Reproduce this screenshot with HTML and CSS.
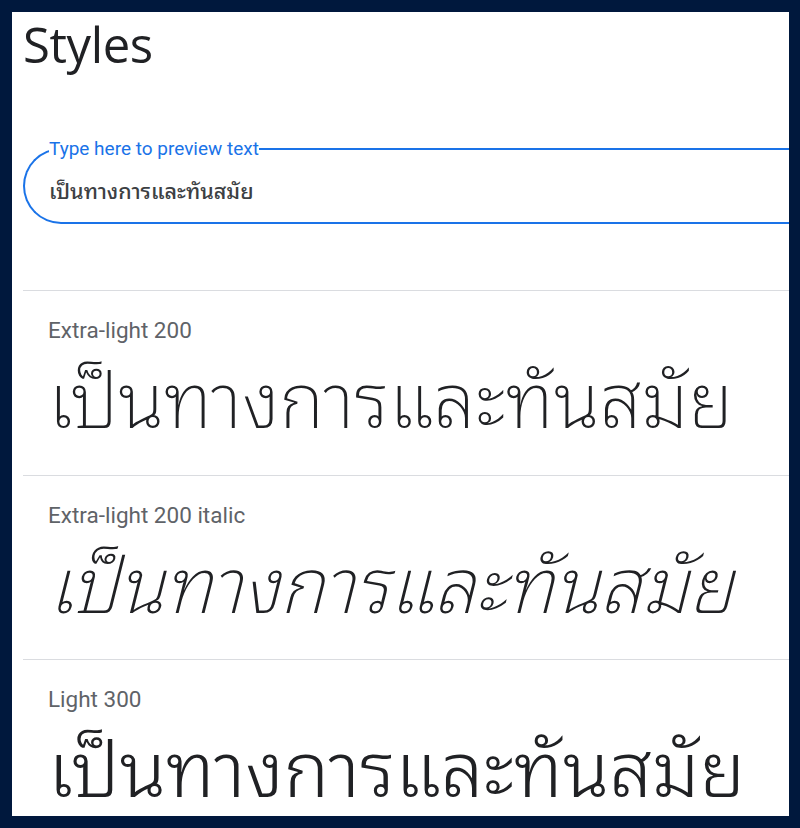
FILE: index.html
```html
<!DOCTYPE html>
<html lang="en">
<head>
    <meta charset="UTF-8">
    <title>Styles</title>
    <link rel="stylesheet" href="styles.css">
</head>
<body>
<div class="frame">
    <main class="panel">
        <h1 class="title">Styles</h1>

        <!-- Preview input -->
        <fieldset class="preview">
            <legend>Type here to preview text</legend>
            <input type="text" class="preview-input" value="เป็นทางการและทันสมัย">
        </fieldset>

        <!-- Style samples -->
        <section class="style-row">
            <p class="style-name">Extra-light 200</p>
            <p class="sample w200">เป็นทางการและทันสมัย</p>
        </section>

        <section class="style-row">
            <p class="style-name">Extra-light 200 italic</p>
            <p class="sample w200 italic">เป็นทางการและทันสมัย</p>
        </section>

        <section class="style-row">
            <p class="style-name">Light 300</p>
            <p class="sample w300">เป็นทางการและทันสมัย</p>
        </section>
    </main>
</div>
</body>
</html>
```

FILE: styles.css
```css
body {
    margin: 0;
    padding: 0;
    background-color: #00183d;
    font-family: Roboto, "Noto Sans", sans-serif;
}

.frame {
    padding: 12px 11px 12px 12px;
}

.panel {
    background-color: #ffffff;
    height: 804px;
    overflow: hidden;
    padding-left: 11px;
}

.title {
    margin: 0;
    padding-top: 2px;
    font-family: "Open Sans", sans-serif;
    font-weight: 400;
    font-size: 49px;
    line-height: 60px;
    letter-spacing: -0.4px;
    color: #202124;
}

.preview {
    width: 900px;
    margin: 66px 0 0 0;
    padding: 0 0 0 24px;
    height: 84px;
    border: 2px solid #1a73e8;
    border-right: none;
    border-radius: 38px 0 0 38px;
    box-sizing: border-box;
}

.preview legend {
    padding: 0;
    font-size: 19px;
    color: #1a73e8;
    line-height: 18px;
}

.preview-input {
    border: none;
    outline: none;
    padding: 0;
    margin-top: 14px;
    font-family: "Noto Sans Thai Looped", "Noto Sans", sans-serif;
    font-size: 21.5px;
    font-weight: 500;
    color: #3c4043;
    width: 600px;
    background: transparent;
}

.style-row {
    border-top: 1px solid #dadce0;
    padding-left: 25px;
    height: 184.5px;
    box-sizing: border-box;
}

.style-row:first-of-type {
    margin-top: 66px;
}

.style-name {
    margin: 0;
    padding-top: 25px;
    font-size: 22.5px;
    line-height: 28px;
    color: #5f6368;
}

.sample {
    margin: 0;
    font-family: "Noto Sans Thai Looped", "Noto Sans", sans-serif;
    font-size: 76.5px;
    line-height: 100px;
    color: #202124;
    white-space: nowrap;
}

.w200 {
    font-weight: 200;
}

.w300 {
    font-weight: 300;
}

.italic {
    font-style: italic;
}
```
